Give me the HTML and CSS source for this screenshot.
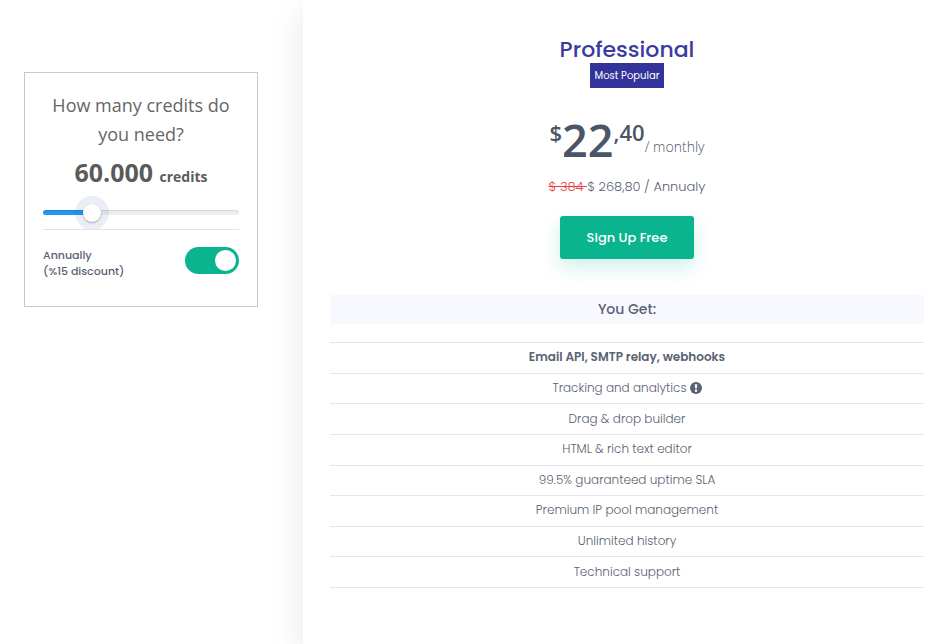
FILE: index.html
```html
<!DOCTYPE html>
<html lang="en">
<head>
<meta charset="utf-8">
<meta name="viewport" content="width=device-width, initial-scale=1">
<title>Pricing</title>
<link rel="stylesheet" href="styles.css">
</head>
<body>
<div class="page">
  <aside class="sidebar">
    <form class="calculator">
      <label class="question" for="credits">How many credits do you need?</label>
      <output class="amount" for="credits">60.000 <span>credits</span></output>
      <input class="slider" id="credits" type="range" min="10000" max="230000" step="10000" value="60000">
      <div class="billing">
        <label for="annual">Annually<br>(%15 discount)</label>
        <input class="switch" id="annual" type="checkbox" role="switch" checked>
      </div>
    </form>
  </aside>
  <main class="plan">
    <h1 class="plan-name">Professional</h1>
    <span class="tag">Most Popular</span>
    <p class="price"><span class="minor">$</span><span class="major">22</span><span class="minor">,40</span><span class="period">/ monthly</span></p>
    <p class="yearly"><del>$ 384 </del>$ 268,80 / Annualy</p>
    <button class="signup" type="button">Sign Up Free</button>
    <h2 class="features-title">You Get:</h2>
    <ul class="features">
      <li><strong>Email API, SMTP relay, webhooks</strong></li>
      <li>Tracking and analytics
        <svg class="info" viewBox="0 0 12 12" aria-hidden="true"><circle cx="6" cy="6" r="6" fill="currentColor"/><path d="M4.8 2.2h2.4l-.4 4.4H5.2z" fill="#fff"/><circle cx="6" cy="8.7" r="1.2" fill="#fff"/></svg>
      </li>
      <li>Drag &amp; drop builder</li>
      <li>HTML &amp; rich text editor</li>
      <li>99.5% guaranteed uptime SLA</li>
      <li>Premium IP pool management</li>
      <li>Unlimited history</li>
      <li>Technical support</li>
    </ul>
  </main>
</div>
</body>
</html>
```
FILE: styles.css
```css
* {
  box-sizing: border-box;
}

body {
  margin: 0;
  background: #fff;
  color: #596272;
  font-family: Poppins, Inter, sans-serif;
  font-size: 12px;
}

.page {
  display: grid;
  grid-template-columns: 303px 1fr;
  min-height: 100vh;
  overflow: hidden;
}

.sidebar {
  padding: 72px 45px 24px 24px;
}

.calculator {
  display: flex;
  flex-direction: column;
  padding: 18px 18px 27px;
  border: 1px solid #c9c9c9;
  color: #5b5b5b;
  font-family: "Open Sans", sans-serif;
}

.question {
  color: #666;
  font-size: 18px;
  line-height: 29px;
  text-align: center;
}

.amount {
  margin-top: 6px;
  font-size: 25px;
  font-weight: 700;
  line-height: 34px;
  text-align: center;
}

.amount span {
  font-size: 14px;
}

.slider {
  --fill: 25%;
  width: 100%;
  height: 18px;
  margin: 9px 0 8px;
  appearance: none;
  background: none;
}

.slider::-webkit-slider-runnable-track {
  height: 5px;
  border-radius: 3px;
  background: linear-gradient(to right, #2196f3 var(--fill), #eee var(--fill));
  box-shadow: inset 0 1px 1px rgba(0, 0, 0, 0.1);
}

.slider::-webkit-slider-thumb {
  width: 18px;
  height: 18px;
  margin-top: -6px;
  appearance: none;
  border-radius: 50%;
  background: #fff;
  box-shadow: 0 1px 2px rgba(0, 0, 0, 0.3), 0 0 0 8px rgba(63, 81, 181, 0.1);
}

.billing {
  display: flex;
  align-items: flex-start;
  justify-content: space-between;
  padding-top: 17px;
  border-top: 1px solid #e4e4e4;
  color: #596272;
  font-family: Poppins, Inter, sans-serif;
  font-size: 11px;
  font-weight: 500;
  line-height: 16px;
}

.switch {
  display: flex;
  justify-content: flex-end;
  width: 54px;
  height: 27px;
  margin: 0;
  padding: 3px;
  appearance: none;
  border-radius: 14px;
  background: #09b48f;
}

.switch::before {
  width: 21px;
  height: 21px;
  border-radius: 50%;
  background: #fff;
  content: "";
}

.switch:not(:checked) {
  justify-content: flex-start;
  background: #c9c9c9;
}

.plan {
  display: flex;
  flex-direction: column;
  align-items: center;
  padding: 36px 24px 24px 27px;
  box-shadow: 0 10px 30px rgba(0, 0, 0, 0.1);
}

.plan-name {
  margin: 0;
  color: #3a3a9f;
  font-size: 22px;
  font-weight: 500;
  line-height: 27px;
}

.tag {
  padding: 0 5px;
  background: #333399;
  color: #fff;
  font-size: 10px;
  font-weight: 400;
  line-height: 25px;
}

.price {
  display: flex;
  align-items: flex-start;
  margin: 31px 0 0;
  color: #4b5568;
  font-family: "Open Sans", sans-serif;
  font-weight: 600;
}

.major {
  font-size: 45px;
  line-height: 42px;
}

.minor {
  font-size: 22px;
  line-height: 26px;
}

.period {
  align-self: flex-end;
  font-size: 14px;
  font-weight: 300;
  line-height: 28px;
}

.yearly {
  margin: 16px 0 19px;
  font-size: 13px;
  font-weight: 300;
  line-height: 20px;
}

.yearly del {
  color: #e53e3e;
  white-space: pre;
}

.signup {
  padding: 0 27px;
  border: 0;
  border-radius: 3px;
  background: #09b48f;
  box-shadow: 0 8px 20px rgba(9, 180, 143, 0.2);
  color: #fff;
  font-family: inherit;
  font-size: 13px;
  font-weight: 500;
  line-height: 43px;
}

.features-title {
  align-self: stretch;
  margin: 36px 0 18px;
  background: #f8f9ff;
  font-size: 14px;
  font-weight: 500;
  line-height: 29px;
  text-align: center;
}

.features {
  display: grid;
  grid-auto-rows: 1fr;
  align-self: stretch;
  min-height: 246px;
  margin: 0;
  padding: 0;
  border-top: 1px solid #e4e6ea;
  font-weight: 300;
  list-style: none;
}

.features strong {
  font-weight: 600;
}

.features li {
  display: flex;
  align-items: center;
  justify-content: center;
  gap: 3px;
  padding-bottom: 1px;
  border-bottom: 1px solid #e4e6ea;
}

.info {
  width: 12px;
  height: 12px;
}
```
